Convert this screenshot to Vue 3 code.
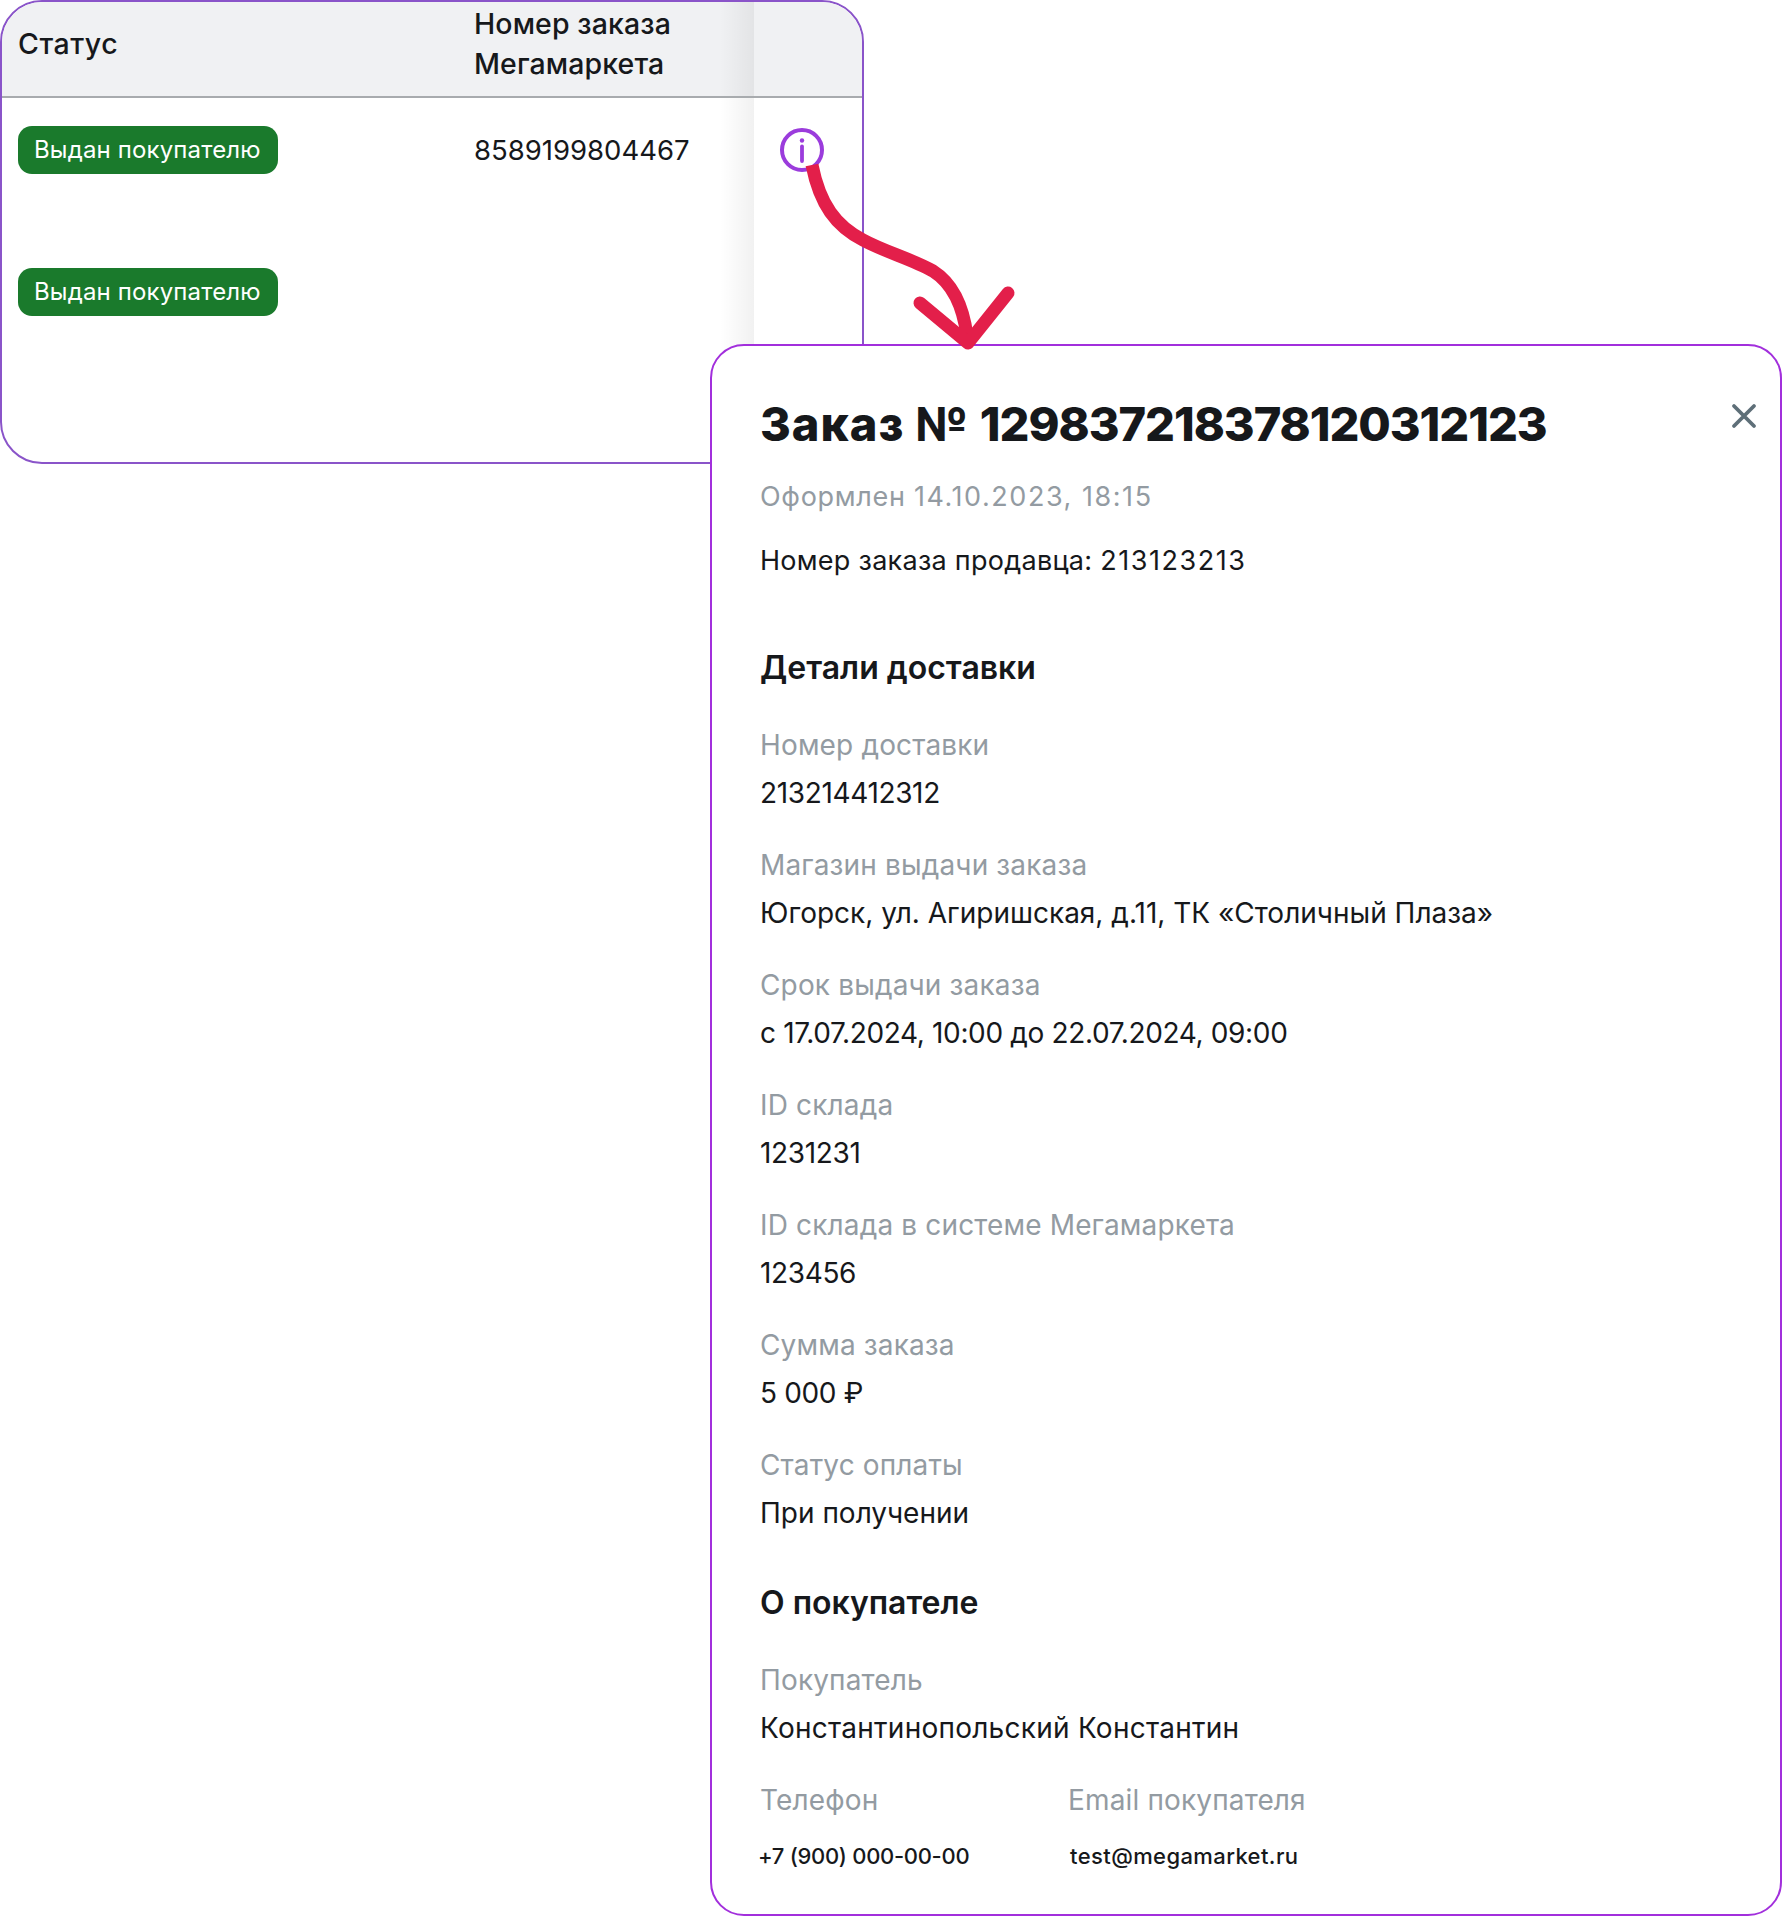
<template>
  <div class="canvas">
    <section class="table-card">
      <div class="table-head">
        <div class="col-status head-cell">Статус</div>
        <div class="col-number head-cell">Номер заказа<br />Мегамаркета</div>
        <div class="col-action"></div>
      </div>
      <div class="table-body">
        <div v-for="(row, i) in rows" :key="i" class="table-row">
          <div class="col-status"><span class="pill">{{ row.status }}</span></div>
          <div class="col-number number-text">{{ row.number }}</div>
          <div class="col-action">
            <svg v-if="row.number" class="info-icon" width="46" height="46" viewBox="0 0 46 46" fill="none">
              <circle cx="23" cy="23" r="20" stroke="#9b3cdc" stroke-width="4" />
              <circle cx="23" cy="13.5" r="2.2" fill="#9b3cdc" />
              <path d="M23 19.5v14.5" stroke="#9b3cdc" stroke-width="3.8" stroke-linecap="round" />
            </svg>
          </div>
        </div>
      </div>
    </section>

    <section class="modal">
      <button class="close" aria-label="Закрыть">
        <svg width="28" height="28" viewBox="0 0 28 28" fill="none">
          <path d="M4 4l20 20M24 4L4 24" stroke="#5e6f78" stroke-width="3.8" stroke-linecap="round" />
        </svg>
      </button>
      <h1 class="title"><span class="title-word">Заказ № </span><span class="title-num">129837218378120312123</span></h1>
      <p class="created"><span class="created-word">Оформлен </span><span class="created-date">14.10.2023, 18:15</span></p>
      <p class="seller"><span class="seller-word">Номер заказа продавца: </span><span class="seller-num">213123213</span></p>

      <h2 class="section-title first">Детали доставки</h2>
      <div class="fields">
        <div v-for="f in delivery" :key="f.label" class="field">
          <div class="label">{{ f.label }}</div>
          <div class="value" :class="{ tight: f.numeric }">{{ f.value }}</div>
        </div>
      </div>

      <h2 class="section-title second">О покупателе</h2>
      <div class="fields">
        <div class="field">
          <div class="label">Покупатель</div>
          <div class="value wide">Константинопольский Константин</div>
        </div>
        <div class="contacts">
          <div class="contact phone">
            <div class="label">Телефон</div>
            <div class="value small">+7 (900) 000-00-00</div>
          </div>
          <div class="contact email">
            <div class="label">Email покупателя</div>
            <div class="value small">test@megamarket.ru</div>
          </div>
        </div>
      </div>
    </section>

    <svg class="arrow" width="1782" height="400" viewBox="0 0 1782 400" fill="none">
      <path d="M812 165C820 205 836 226 863 240C885 252 912 259 933 271C952 283 963 305 967 336" stroke="#e31f4a" stroke-width="13" />
      <path d="M920 303L968 343L1008 293" stroke="#e31f4a" stroke-width="13" stroke-linecap="round" stroke-linejoin="round" />
    </svg>
  </div>
</template>

<script setup>
const rows = [
  { status: 'Выдан покупателю', number: '8589199804467' },
  { status: 'Выдан покупателю', number: '' }
]

const delivery = [
  { label: 'Номер доставки', value: '213214412312', numeric: true },
  { label: 'Магазин выдачи заказа', value: 'Югорск, ул. Агиришская, д.11, ТК «Столичный Плаза»' },
  { label: 'Срок выдачи заказа', value: 'с 17.07.2024, 10:00 до 22.07.2024, 09:00', numeric: true },
  { label: 'ID склада', value: '1231231', numeric: true },
  { label: 'ID склада в системе Мегамаркета', value: '123456', numeric: true },
  { label: 'Сумма заказа', value: '5 000 ₽', numeric: true },
  { label: 'Статус оплаты', value: 'При получении' }
]
</script>

<style>
html,
body {
  background: #fff;
}
</style>

<style scoped>
.canvas {
  position: relative;
  width: 1782px;
  height: 1916px;
  overflow: hidden;
  background: #fff;
  font-family: Inter, "Noto Sans", sans-serif;
  color: #16181b;
}

/* table behind the modal */
.table-card {
  box-sizing: border-box;
  width: 864px;
  height: 464px;
  border: 2px solid #8a54c9;
  border-radius: 42px;
  overflow: hidden;
  display: flex;
  flex-direction: column;
}

.table-head,
.table-row {
  display: grid;
  grid-template-columns: 472px 280px 1fr;
}

.table-head {
  height: 94px;
  background: #f0f1f3;
  border-bottom: 2px solid #a8abae;
}

.table-body {
  flex: 1;
  display: flex;
  flex-direction: column;
}

.table-row {
  height: 142px;
}

.table-row:last-child {
  flex: 1;
}

.col-status {
  padding: 28px 0 0 16px;
}

.col-number {
  padding-top: 28px;
}

.head-cell {
  padding-top: 2px;
  align-self: start;
  font-size: 28.5px;
  line-height: 40px;
  font-weight: 500;
  letter-spacing: 0.1px;
}

.table-head .col-status {
  padding-top: 22px;
  letter-spacing: 0.5px;
}

.col-action {
  position: relative;
  padding: 29px 0 0 25px;
}

/* shadow of the pinned column */
.col-action::before {
  content: "";
  position: absolute;
  top: 0;
  bottom: 0;
  left: -34px;
  width: 34px;
  background: linear-gradient(to right, rgba(0, 0, 0, 0), rgba(0, 0, 0, 0.055));
}

.pill {
  display: inline-block;
  height: 48px;
  line-height: 47px;
  padding: 0 17px 0 16px;
  border-radius: 14px;
  background: #1a7a2c;
  color: #fff;
  font-size: 24px;
  letter-spacing: 0.15px;
  white-space: nowrap;
}

.number-text {
  font-size: 27.5px;
  line-height: 48px;
}

.info-icon {
  display: block;
}

/* order details */
.modal {
  position: absolute;
  left: 710px;
  top: 344px;
  box-sizing: border-box;
  width: 1072px;
  height: 1572px;
  padding: 50px 48px 0;
  background: #fff;
  border: 2px solid #a22fdc;
  border-radius: 34px;
}

.close {
  position: absolute;
  top: 56px;
  right: 22px;
  padding: 0;
  border: 0;
  background: none;
  line-height: 0;
}

.title {
  margin: 0;
  font-size: 47px;
  line-height: 56px;
  font-weight: 800;
  white-space: nowrap;
}

.title-word {
  letter-spacing: 1px;
}

.title-num {
  letter-spacing: -1.05px;
}

.created,
.seller {
  margin: 0;
  font-size: 27px;
  line-height: 36px;
}

.created {
  margin-top: 27px;
  color: #939ba2;
}

.created-word {
  letter-spacing: 0.7px;
}

.created-date {
  letter-spacing: 1.55px;
}

.seller {
  margin-top: 28px;
}

.seller-word {
  letter-spacing: 0.27px;
}

.seller-num {
  letter-spacing: 1.55px;
}

.section-title {
  margin: 0;
  font-size: 32px;
  line-height: 40px;
  font-weight: 600;
}

.section-title.first {
  margin-top: 69px;
}

.section-title.second {
  margin-top: 52px;
}

.fields {
  margin-top: 39px;
  display: flex;
  flex-direction: column;
  gap: 36px;
}

.label {
  font-size: 28px;
  line-height: 36px;
  letter-spacing: 0.15px;
  color: #939ba2;
}

.value {
  margin-top: 12px;
  font-size: 28px;
  line-height: 36px;
}

.value.tight {
  letter-spacing: -0.35px;
}

.value.wide {
  letter-spacing: 0.25px;
}

.value.small {
  margin-top: 20px;
  font-size: 22px;
  font-weight: 500;
}

.contacts {
  display: flex;
}

.phone {
  width: 308px;
}

.phone .value {
  margin-left: -2px;
  letter-spacing: -0.3px;
}

.email .value {
  margin-left: 2px;
  letter-spacing: 0.4px;
}

.arrow {
  position: absolute;
  left: 0;
  top: 0;
  pointer-events: none;
}
</style>
